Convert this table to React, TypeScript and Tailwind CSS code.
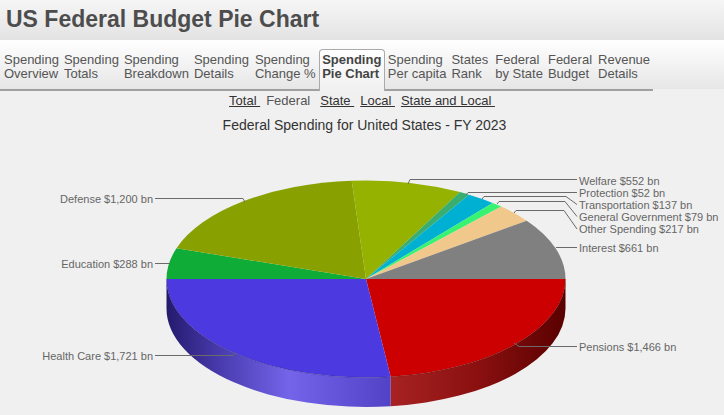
import React from "react";

// boundaries in ellipse angle (deg, clockwise from 3 o'clock), read off the chart
type Slice = { name: string; a1: number; a2: number; color: string };

const slices: Slice[] = [
  { name: "Pensions", a1: 0, a2: 82.9, color: "#cc0000" },
  { name: "Health Care", a1: 82.9, a2: 180, color: "#4c3ae0" },
  { name: "Education", a1: 180, a2: 198.2, color: "#0fac38" },
  { name: "Defense", a1: 198.2, a2: 265.9, color: "#88a000" },
  { name: "Welfare", a1: 265.9, a2: 298.1, color: "#95b200" },
  { name: "Protection", a1: 298.1, a2: 301.1, color: "#3aae6e" },
  { name: "Transportation", a1: 301.1, a2: 309.4, color: "#00b0d2" },
  { name: "General Government", a1: 309.4, a2: 312.7, color: "#38f272" },
  { name: "Other Spending", a1: 312.7, a2: 323.7, color: "#f0c88c" },
  { name: "Interest", a1: 323.7, a2: 360, color: "#808080" },
];

const tabs = [
  { top: "Spending", bottom: "Overview", pad: "pl-[2.5px] pr-[2.5px]" },
  { top: "Spending", bottom: "Totals", pad: "pl-[2.5px] pr-[2.5px]" },
  { top: "Spending", bottom: "Breakdown", pad: "pl-[2.5px] pr-[2.5px]" },
  { top: "Spending", bottom: "Details", pad: "pl-[2.5px] pr-[3.5px]" },
  { top: "Spending", bottom: "Change %", pad: "pl-[2.5px] pr-[3.5px]" },
  { top: "Spending", bottom: "Pie Chart", pad: "pl-[2px] pr-[3px]", active: true },
  { top: "Spending", bottom: "Per capita", pad: "pl-[2.5px] pr-[2.5px]" },
  { top: "States", bottom: "Rank", pad: "pl-[2.5px] pr-[4.5px]" },
  { top: "Federal", bottom: "by State", pad: "pl-[2.5px] pr-[2.5px]" },
  { top: "Federal", bottom: "Budget", pad: "pl-[2.5px] pr-[3.5px]" },
  { top: "Revenue", bottom: "Details", pad: "pl-[2.5px] pr-[2.5px]" },
];

const CX = 366;
const CY = 279;
const RX = 199.5;
const RY = 98.5;
const DEPTH = 29.5;

const pt = (deg: number, dy = 0) => {
  const a = (deg * Math.PI) / 180;
  return `${(CX + RX * Math.cos(a)).toFixed(2)},${(CY + RY * Math.sin(a) + dy).toFixed(2)}`;
};

const topPath = (a1: number, a2: number) =>
  `M${CX},${CY} L${pt(a1)} A${RX},${RY} 0 ${a2 - a1 > 180 ? 1 : 0} 1 ${pt(a2)} Z`;

const sidePath = (a1: number, a2: number) =>
  `M${pt(a1)} A${RX},${RY} 0 0 1 ${pt(a2)} L${pt(a2, DEPTH)} A${RX},${RY} 0 0 0 ${pt(a1, DEPTH)} Z`;

const labels = [
  { text: "Welfare $552 bn", x: 579, y: 180.5, anchor: "start", line: "408,184 410,179.5 577,179.5" },
  { text: "Protection $52 bn", x: 579, y: 192.5, anchor: "start", line: "466,195 468,192.5 577,192.5" },
  { text: "Transportation $137 bn", x: 579, y: 204.5, anchor: "start", line: "482,199 484,196.5 566,196.5 577,204.5" },
  { text: "General Government $79 bn", x: 579, y: 216.5, anchor: "start", line: "497,204 499,201.5 565,201.5 577,216.5" },
  { text: "Other Spending $217 bn", x: 579, y: 229, anchor: "start", line: "514,213 516,210.5 564,210.5 577,229" },
  { text: "Interest $661 bn", x: 579, y: 248, anchor: "start", line: "556,247.5 577,247.5" },
  { text: "Pensions $1,466 bn", x: 579, y: 347, anchor: "start", line: "514,343 519,346.5 577,346.5" },
  { text: "Health Care $1,721 bn", x: 153, y: 355.5, anchor: "end", line: "155,355.5 233,355.5 236,352.5" },
  { text: "Education $288 bn", x: 153, y: 264, anchor: "end", line: "155,263.5 170,263.5" },
  { text: "Defense $1,200 bn", x: 153, y: 199, anchor: "end", line: "155,198.5 243,198.5 245,202" },
];

const PieChart = () => {
  return (
    <svg width="724" height="280" viewBox="0 135 724 280" className="block">
      <defs>
        <linearGradient id="sideHealth" gradientUnits="userSpaceOnUse" x1="166" y1="0" x2="390" y2="0">
          <stop offset="0" stopColor="#231a6c" />
          <stop offset="0.25" stopColor="#4a3cb0" />
          <stop offset="0.55" stopColor="#7464ea" />
          <stop offset="1" stopColor="#5242c6" />
        </linearGradient>
        <linearGradient id="sidePensions" gradientUnits="userSpaceOnUse" x1="390" y1="0" x2="566" y2="0">
          <stop offset="0" stopColor="#a82222" />
          <stop offset="0.5" stopColor="#8a1010" />
          <stop offset="1" stopColor="#5a0000" />
        </linearGradient>
      </defs>

      <path d={sidePath(slices[0].a1, slices[0].a2)} fill="url(#sidePensions)" />
      <path d={sidePath(slices[1].a1, slices[1].a2)} fill="url(#sideHealth)" />

      {slices.map((s) => (
        <path key={s.name} d={topPath(s.a1, s.a2)} fill={s.color} />
      ))}

      <path
        d={`M${pt(0)} A${RX},${RY} 0 0 1 ${pt(180)}`}
        fill="none"
        stroke="rgba(0,0,0,0.18)"
        strokeWidth="1"
      />

      {labels.map((l) => (
        <g key={l.text}>
          <polyline points={l.line} fill="none" stroke="#6a6a6a" strokeWidth="1" />
          <text
            x={l.x}
            y={l.y}
            textAnchor={l.anchor as "start" | "end"}
            dominantBaseline="central"
            fontSize="11"
            fill="#666"
            fontFamily="'Liberation Sans', Arial, sans-serif"
          >
            {l.text}
          </text>
        </g>
      ))}
    </svg>
  );
};

const App = () => {
  return (
    <div className="w-[724px] h-[415px] overflow-hidden bg-[#f0f0f0] font-['Liberation_Sans',Arial,sans-serif]">
      <div className="h-[40px] bg-gradient-to-b from-[#f6f6f6] to-[#e3e3e3] px-[6px]">
        <h1 className="text-[23px] leading-[38px] font-bold text-[#4d4d4d]">
          US Federal Budget Pie Chart
        </h1>
      </div>

      <div className="h-[49px] pt-[7px] bg-gradient-to-b from-white to-[#e6e6e6]">
        <div className="inline-flex h-full items-stretch border-b-2 border-[#a0a0a0] pl-[1.5px]">
          {tabs.map((t, i) =>
            t.active ? (
              <div
                key={i}
                className={`mb-[-2px] rounded-t-[4px] border border-b-0 border-[#aaaaaa] bg-gradient-to-b from-white to-[#f0f0f0] pt-[3px] text-[13px] leading-[14px] font-bold text-[#444] whitespace-nowrap ${t.pad}`}
              >
                <div>{t.top}</div>
                <div>{t.bottom}</div>
              </div>
            ) : (
              <div
                key={i}
                className={`pt-[4px] text-[13px] leading-[14px] text-[#555] whitespace-nowrap ${t.pad}`}
              >
                <div>{t.top}</div>
                <div>{t.bottom}</div>
              </div>
            )
          )}
        </div>
      </div>

      <div className="h-[28px] pt-[4px] flex justify-center gap-[6px] text-[13px] leading-[15px] text-[#333]">
        <a className="underline">Total&nbsp;</a>
        <span className="text-[#555] mr-[4px]">Federal</span>
        <a className="underline">State&nbsp;</a>
        <a className="underline">Local&nbsp;</a>
        <a className="underline">State and Local&nbsp;</a>
      </div>

      <div className="h-[18px] pl-[5px] text-center text-[14px] leading-[16px] text-[#333]">
        Federal Spending for United States - FY 2023
      </div>

      <PieChart />
    </div>
  );
};

export default App;
